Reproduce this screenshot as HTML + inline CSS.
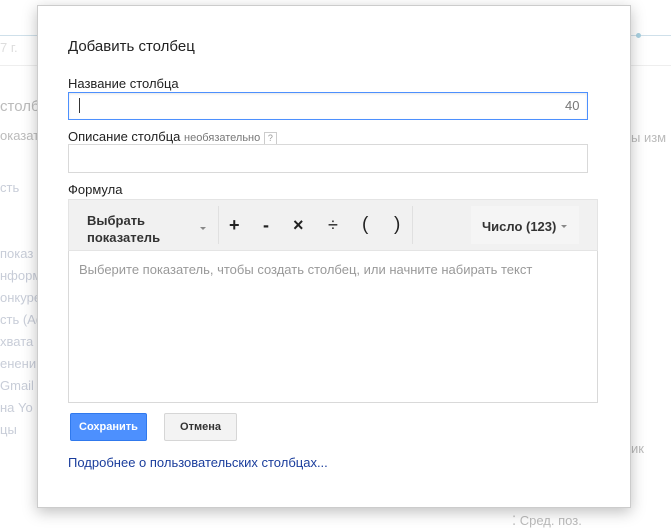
<!DOCTYPE html>
<html><head><meta charset="utf-8"><style>
body{margin:0;width:671px;height:527px;background:#fff;font-family:"Liberation Sans",Arial,sans-serif;position:relative;overflow:hidden}
.a{position:absolute}
.bg{color:#c8cdd8;font-size:13px}
.dlg{left:37px;top:5px;width:592px;height:501px;background:#fff;border:1px solid #ccc;box-shadow:0 4px 14px rgba(0,0,0,.25)}
.lbl{font-size:13px;color:#222}
</style></head><body>
<div class="a" style="left:0;top:35px;width:37px;height:1px;background:#cfe0ea"></div>
<div class="a" style="left:0;top:65px;width:37px;height:1px;background:#eee"></div>
<div class="a bg" style="left:0;top:40px;color:#ddd">7 г.</div>
<div class="a bg" style="left:0;top:98px;font-size:15px;color:#bbb">столбц</div>
<div class="a bg" style="left:0;top:128px;color:#bbb">оказат</div>
<div class="a bg" style="left:0;top:180px">сть</div>
<div class="a bg" style="left:0;top:246px">показ</div>
<div class="a bg" style="left:0;top:268px">нформ</div>
<div class="a bg" style="left:0;top:290px">онкуре</div>
<div class="a bg" style="left:0;top:312px">сть (Ad</div>
<div class="a bg" style="left:0;top:334px">хвата</div>
<div class="a bg" style="left:0;top:356px">енений</div>
<div class="a bg" style="left:0;top:378px">Gmail</div>
<div class="a bg" style="left:0;top:400px">на Yo</div>
<div class="a bg" style="left:0;top:422px">цы</div>
<div class="a" style="left:630px;top:35px;width:41px;height:1px;background:#cfe0ea"></div>
<div class="a" style="left:636px;top:33px;width:5px;height:5px;border-radius:50%;background:#a8d0e0"></div>
<div class="a" style="left:630px;top:65px;width:41px;height:1px;background:#eee"></div>
<div class="a bg" style="left:631px;top:130px;color:#bbb">ы изм</div>
<div class="a bg" style="left:631px;top:441px;color:#bbb">ик</div>
<div class="a bg" style="left:512px;top:513px;color:#bbb">⁚ Сред. поз.</div>
<div class="a dlg">
<div class="a" style="left:30px;top:32px;font-size:15px;color:#222">Добавить столбец</div>
<div class="a lbl" style="left:30px;top:70px">Название столбца</div>
<div class="a" style="left:30px;top:86px;width:518px;height:26px;border:1px solid #4d90fe;box-shadow:inset 0 1px 2px rgba(0,0,0,.1)"></div>
<div class="a" style="left:41px;top:92px;width:1px;height:15px;background:#333"></div>
<div class="a" style="left:527px;top:92px;font-size:13px;color:#777">40</div>
<div class="a lbl" style="left:30px;top:123px">Описание столбца <span style="font-size:11px;color:#777">необязательно</span> <span style="display:inline-block;width:11px;height:11px;border:1px solid #ccc;font-size:9px;color:#999;text-align:center;line-height:11px">?</span></div>
<div class="a" style="left:30px;top:138px;width:518px;height:27px;border:1px solid #d9d9d9"></div>
<div class="a lbl" style="left:30px;top:176px">Формула</div>
<div class="a" style="left:30px;top:193px;width:530px;height:52px;background:#f1f1f1;border:1px solid #e4e4e4;box-sizing:border-box"></div>
<div class="a" style="left:180px;top:200px;width:1px;height:38px;background:#e0e0e0"></div>
<div class="a" style="left:374px;top:200px;width:1px;height:38px;background:#e0e0e0"></div>
<div class="a" style="left:433px;top:200px;width:108px;height:38px;background:#f5f5f5"></div>
<div class="a" style="left:49px;top:206px;font-size:13px;font-weight:bold;color:#333;line-height:17px">Выбрать<br>показатель</div>
<div class="a" style="left:162px;top:221px;width:0;height:0;border-left:3px solid transparent;border-right:3px solid transparent;border-top:3px solid #888"></div>
<div class="a" style="left:191px;top:209px;font-size:18px;font-weight:bold;color:#222">+</div>
<div class="a" style="left:225px;top:209px;font-size:18px;font-weight:bold;color:#222">-</div>
<div class="a" style="left:255px;top:209px;font-size:18px;font-weight:bold;color:#222">×</div>
<div class="a" style="left:290px;top:209px;font-size:18px;color:#222">÷</div>
<div class="a" style="left:324px;top:208px;font-size:19px;color:#222">(</div>
<div class="a" style="left:356px;top:208px;font-size:19px;color:#222">)</div>
<div class="a" style="left:444px;top:213px;font-size:13px;font-weight:bold;color:#333">Число (123)</div>
<div class="a" style="left:523px;top:219px;width:0;height:0;border-left:3px solid transparent;border-right:3px solid transparent;border-top:3px solid #888"></div>
<div class="a" style="left:30px;top:245px;width:528px;height:151px;border:1px solid #d9d9d9;border-top:none"></div>
<div class="a" style="left:41px;top:256px;font-size:13px;color:#999">Выберите показатель, чтобы создать столбец, или начните набирать текст</div>
<div class="a" style="left:32px;top:407px;width:77px;height:28px;background:#4d90fe;border:1px solid #3079ed;box-sizing:border-box;border-radius:2px;color:#fff;font-size:11px;font-weight:bold;text-align:center;line-height:27px">Сохранить</div>
<div class="a" style="left:126px;top:407px;width:73px;height:28px;background:#f3f3f3;border:1px solid #d6d6d6;box-sizing:border-box;border-radius:2px;color:#333;font-size:11px;font-weight:bold;text-align:center;line-height:27px">Отмена</div>
<div class="a" style="left:30px;top:449px;font-size:13px;color:#1a3d9c">Подробнее о пользовательских столбцах...</div>
</div>
</body></html>
